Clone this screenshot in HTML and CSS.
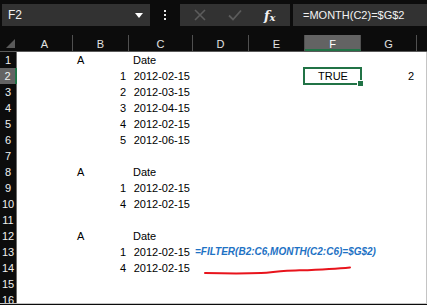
FILE: index.html
```html
<!DOCTYPE html>
<html lang="en">
<head>
    <meta charset="UTF-8">
    <title>Sheet - FILTER by month</title>
    <link rel="stylesheet" href="styles.css">
</head>
<body>
<div class="app">
    <div class="toolbar">
        <div class="namebox">
            <span>F2</span>
            <svg class="caret" width="8" height="5" viewBox="0 0 8 5"><path d="M0 0H8L4 5Z" fill="#fff"/></svg>
        </div>
        <div class="dots"><i></i><i></i><i></i></div>
        <div class="btns">
            <svg width="14" height="14" viewBox="0 0 14 14"><path d="M2 2L12 12M12 2L2 12" stroke="#5c5c5c" stroke-width="1.6"/></svg>
            <svg width="14" height="12" viewBox="0 0 14 12"><path d="M1 6.5L5 10.5L13 1.5" stroke="#5c5c5c" stroke-width="1.8" fill="none"/></svg>
            <span class="fx">f<sub>x</sub></span>
        </div>
        <div class="formula">=MONTH(C2)=$G$2</div>
    </div>

    <div class="sheet">
        <div class="row colhead">
            <div class="corner"><svg width="9" height="9" viewBox="0 0 9 9"><path d="M9 0V9H0Z" fill="#5a5a5a"/></svg></div>
            <div>A</div><div>B</div><div>C</div><div>D</div><div>E</div><div class="sel">F</div><div>G</div><div></div>
        </div>
        <div class="body">
            <div class="row"><div class="rh">1</div><div></div><div class="l">A</div><div class="l">Date</div><div></div><div></div><div></div><div></div><div></div></div>
            <div class="row"><div class="rh sel">2</div><div></div><div class="r">1</div><div class="r">2012-02-15</div><div></div><div></div><div class="c active">TRUE<span class="box"><i></i></span></div><div class="r">2</div><div></div></div>
            <div class="row"><div class="rh">3</div><div></div><div class="r">2</div><div class="r">2012-03-15</div><div></div><div></div><div></div><div></div><div></div></div>
            <div class="row"><div class="rh">4</div><div></div><div class="r">3</div><div class="r">2012-04-15</div><div></div><div></div><div></div><div></div><div></div></div>
            <div class="row"><div class="rh">5</div><div></div><div class="r">4</div><div class="r">2012-02-15</div><div></div><div></div><div></div><div></div><div></div></div>
            <div class="row"><div class="rh">6</div><div></div><div class="r">5</div><div class="r">2012-06-15</div><div></div><div></div><div></div><div></div><div></div></div>
            <div class="row"><div class="rh">7</div><div></div><div></div><div></div><div></div><div></div><div></div><div></div><div></div></div>
            <div class="row"><div class="rh">8</div><div></div><div class="l">A</div><div class="l">Date</div><div></div><div></div><div></div><div></div><div></div></div>
            <div class="row"><div class="rh">9</div><div></div><div class="r">1</div><div class="r">2012-02-15</div><div></div><div></div><div></div><div></div><div></div></div>
            <div class="row"><div class="rh">10</div><div></div><div class="r">4</div><div class="r">2012-02-15</div><div></div><div></div><div></div><div></div><div></div></div>
            <div class="row"><div class="rh">11</div><div></div><div></div><div></div><div></div><div></div><div></div><div></div><div></div></div>
            <div class="row"><div class="rh">12</div><div></div><div class="l">A</div><div class="l">Date</div><div></div><div></div><div></div><div></div><div></div></div>
            <div class="row"><div class="rh">13</div><div></div><div class="r">1</div><div class="r">2012-02-15</div><div class="note">=FILTER(B2:C6,MONTH(C2:C6)=$G$2)</div><div></div><div></div><div></div><div></div></div>
            <div class="row"><div class="rh">14</div><div></div><div class="r">4</div><div class="r">2012-02-15</div><div></div><div></div><div></div><div></div><div></div></div>
            <div class="row"><div class="rh">15</div><div></div><div></div><div></div><div></div><div></div><div></div><div></div><div></div></div>
            <div class="row"><div class="rh">16</div><div></div><div></div><div></div><div></div><div></div><div></div><div></div><div></div></div>

            <!-- hand drawn underline -->
            <svg class="scribble" width="160" height="12" viewBox="0 0 160 12">
                <path d="M2 9C20 9.5 40 9.8 58 9C68 8.6 72 7.4 84 6.8C104 6 126 5.6 147 3.4" stroke="#e8141c" stroke-width="2" fill="none" stroke-linecap="round"/>
            </svg>
        </div>
    </div>
</div>
</body>
</html>
```

FILE: styles.css
```css
body { margin: 0; background: #fff; font-family: "Liberation Sans", Arial, sans-serif; }
.app { width: 427px; height: 305px; overflow: hidden; background: #0c0c0c; }

.toolbar { height: 35px; box-sizing: border-box; padding: 4px 0 0 2px; display: flex; align-items: flex-start; }
.namebox { width: 148px; height: 22px; background: #323232; display: flex; align-items: center; justify-content: space-between; padding: 0 7px 0 6px; box-sizing: border-box; color: #f2f2f2; font-size: 12px; }
.caret { margin-top: 1px; }
.dots { width: 30px; height: 22px; display: flex; flex-direction: column; align-items: center; justify-content: center; gap: 2px; }
.dots i { width: 2px; height: 2px; background: #e6e6e6; }
.btns { width: 110px; height: 22px; background: #323232; display: flex; align-items: center; padding-left: 13px; gap: 21px; box-sizing: border-box; }
.fx { font-family: "DejaVu Serif", "Liberation Serif", serif; font-style: italic; font-weight: bold; color: #f2f2f2; font-size: 13px; margin-left: 1px; }
.fx sub { font-size: 10px; vertical-align: -1px; }
.formula { flex: 1; margin-left: 3px; height: 22px; background: #323232; color: #f2f2f2; font-size: 11px; line-height: 22px; padding-left: 10px; white-space: nowrap; }

.row { display: grid; grid-template-columns: 17px 56px 56px 64px 56px 56px 56px 56px 10px; height: 16px; }
.row > div { box-sizing: border-box; font-size: 11px; line-height: 16px; color: #000; white-space: nowrap; }

.colhead { height: 17px; border-bottom: 1px solid #5a5a5a; box-sizing: border-box; background: #0c0c0c; }
.colhead > div { color: #e2e2e2; text-align: center; border-right: 1px solid #505050; height: 16px; padding-top: 1px; }
.colhead > div:last-child { border-right: none; }
.colhead .corner { border-right: none; display: flex; align-items: flex-end; justify-content: flex-end; padding: 0 2px 3px 0; }
.colhead .sel { background: #636363; border-bottom: 2px solid #217346; color: #fff; }

.body { position: relative; height: 252px; background: #fff; border-right: 1px solid #c4c4c4; border-bottom: 1px solid #c4c4c4; box-sizing: border-box; overflow: hidden; }
.rh { background: #0c0c0c; color: #f0f0f0 !important; text-align: center; border-right: 1px solid #6a6a6a; border-bottom: 1px solid #3c3c3c; font-size: 11px; }
.rh.sel { background: #636363; border-right: 2px solid #217346; }

.l { padding-left: 4px; }
.r { text-align: right; padding-right: 3px; }
.c { text-align: center; }

.active { position: relative; }
.box { position: absolute; left: -2px; top: -1px; width: 59px; height: 18px; border: 2px solid #217346; box-sizing: border-box; }
.box i { position: absolute; right: -4px; bottom: -4px; width: 5px; height: 5px; background: #217346; border: 1px solid #fff; }

.note { padding-left: 2px; color: #1e72c4 !important; font-size: 10px !important; font-weight: bold; font-style: italic; overflow: visible; }
.scribble { position: absolute; left: 203px; top: 212px; }
```
